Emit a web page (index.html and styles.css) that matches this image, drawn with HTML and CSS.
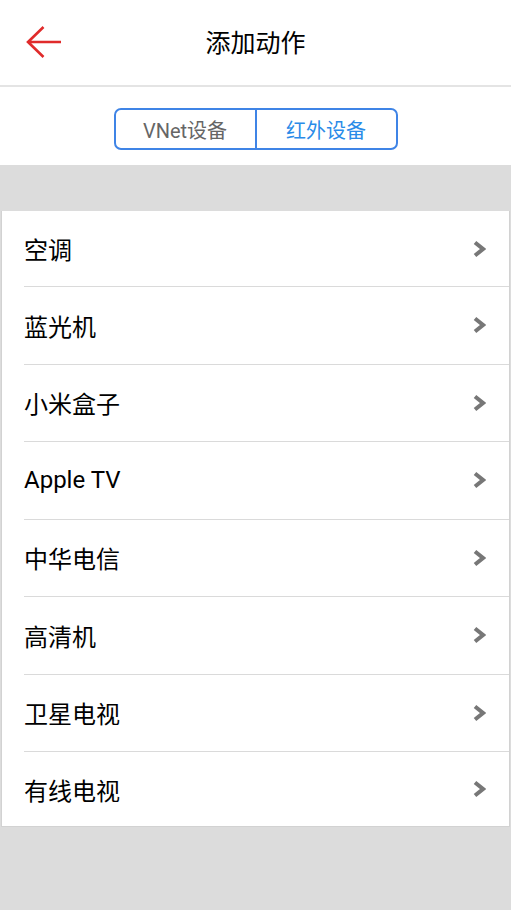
FILE: index.html
```html
<!DOCTYPE html>
<html>

<head>
    <title>添加动作</title>
    <meta name="viewport" content="width=device-width, initial-scale=1">
    <link rel="stylesheet" href="styles.css">
</head>

<body>
    <div class="page">
        <div class="header">
            <button class="back-button">
                <svg width="36" height="34" viewBox="0 0 36 34">
                    <path d="M2 17 H35 M17.5 2 L2 17 L17.5 32" fill="none" stroke="#e02b2b" stroke-width="2.6" />
                </svg>
            </button>
            <div class="title">添加动作</div>
        </div>

        <div class="tabs-bar">
            <div class="tabs">
                <div class="tab">VNet设备</div>
                <div class="tab active">红外设备</div>
            </div>
        </div>

        <div class="content">
            <div class="device-list">
                <div class="device-row"><span>空调</span><svg class="chevron" width="14" height="18" viewBox="0 0 14 18"><polyline points="3,2.5 11,9 3,15.5" fill="none" stroke="#777" stroke-width="4" /></svg></div>
                <div class="device-row"><span>蓝光机</span><svg class="chevron" width="14" height="18" viewBox="0 0 14 18"><polyline points="3,2.5 11,9 3,15.5" fill="none" stroke="#777" stroke-width="4" /></svg></div>
                <div class="device-row"><span>小米盒子</span><svg class="chevron" width="14" height="18" viewBox="0 0 14 18"><polyline points="3,2.5 11,9 3,15.5" fill="none" stroke="#777" stroke-width="4" /></svg></div>
                <div class="device-row"><span>Apple TV</span><svg class="chevron" width="14" height="18" viewBox="0 0 14 18"><polyline points="3,2.5 11,9 3,15.5" fill="none" stroke="#777" stroke-width="4" /></svg></div>
                <div class="device-row"><span>中华电信</span><svg class="chevron" width="14" height="18" viewBox="0 0 14 18"><polyline points="3,2.5 11,9 3,15.5" fill="none" stroke="#777" stroke-width="4" /></svg></div>
                <div class="device-row"><span>高清机</span><svg class="chevron" width="14" height="18" viewBox="0 0 14 18"><polyline points="3,2.5 11,9 3,15.5" fill="none" stroke="#777" stroke-width="4" /></svg></div>
                <div class="device-row"><span>卫星电视</span><svg class="chevron" width="14" height="18" viewBox="0 0 14 18"><polyline points="3,2.5 11,9 3,15.5" fill="none" stroke="#777" stroke-width="4" /></svg></div>
                <div class="device-row"><span>有线电视</span><svg class="chevron" width="14" height="18" viewBox="0 0 14 18"><polyline points="3,2.5 11,9 3,15.5" fill="none" stroke="#777" stroke-width="4" /></svg></div>
            </div>
        </div>
    </div>
</body>

</html>
```

FILE: styles.css
```css
body {
    font-family: Roboto, "Noto Sans CJK SC", sans-serif;
    margin: 0;
    padding: 0;
    background-color: #dcdcdc;
}

.page {
    display: flex;
    flex-direction: column;
    min-height: 910px;
}

.header {
    display: flex;
    align-items: center;
    justify-content: center;
    height: 82px;
    padding-bottom: 3px;
    background-color: #fff;
    border-bottom: 2px solid #e4e4e4;
    position: relative;
}

.back-button {
    position: absolute;
    left: 26px;
    top: 25px;
    padding: 0;
    background-color: transparent;
    border: none;
    cursor: pointer;
}

.back-button svg {
    display: block;
}

.title {
    font-size: 25px;
    color: #000;
}

.tabs-bar {
    display: flex;
    justify-content: center;
    padding: 21px 0 15px;
    background-color: #fff;
}

.tabs {
    display: flex;
    height: 42px;
    border: 2px solid #3f84e6;
    border-radius: 7px;
    box-sizing: border-box;
    overflow: hidden;
}

.tab {
    display: flex;
    align-items: center;
    justify-content: center;
    width: 139px;
    font-size: 20px;
    color: #666;
}

.tab + .tab {
    border-left: 2px solid #3f84e6;
}

.tab.active {
    color: #2a8be8;
}

.content {
    flex-grow: 1;
    padding-top: 46px;
}

.device-list {
    margin: 0 1px;
    background-color: #fff;
    border: 1px solid #d2d2d2;
    border-top: none;
}

.device-row {
    display: flex;
    align-items: center;
    justify-content: space-between;
    height: 76.5px;
    margin-left: 22px;
    padding-right: 23px;
    border-top: 1px solid #dadada;
    font-size: 24px;
    color: #000;
}

.device-row:first-child {
    height: 75px;
    border-top: none;
}

.device-row:last-child {
    height: 74px;
}
```
